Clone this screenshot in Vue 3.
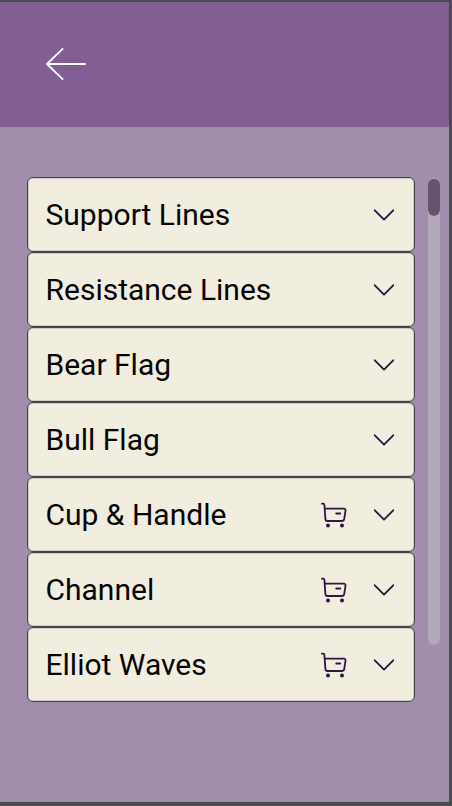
<script setup>
import { ref } from 'vue'

const patterns = ref([
  { name: 'Support Lines', locked: false },
  { name: 'Resistance Lines', locked: false },
  { name: 'Bear Flag', locked: false },
  { name: 'Bull Flag', locked: false },
  { name: 'Cup & Handle', locked: true },
  { name: 'Channel', locked: true },
  { name: 'Elliot Waves', locked: true },
])
</script>

<template>
  <div class="frame">
    <header class="header">
      <button class="back" aria-label="Back">
        <svg width="42" height="36" viewBox="0 0 42 36">
          <path d="M40 18H2M17.6 2.8L2 18L17.6 33.2" />
        </svg>
      </button>
    </header>
    <main class="content">
      <ul class="list">
        <li v-for="item in patterns" :key="item.name" class="item">
          <span class="label">{{ item.name }}</span>
          <svg v-if="item.locked" class="cart" width="28" height="28" viewBox="0 0 28 28">
            <path d="M1.9 2.7H3.2Q4.3 2.7 4.4 3.8L5.4 18Q5.5 20 7.5 20H21.8Q23.8 20 24.2 18L25.5 9.8Q25.8 7.7 23.7 7.7H4.7" />
            <path d="M16.2 12.5H20.3" />
            <circle cx="8" cy="24.4" r="2" />
            <circle cx="22" cy="24.4" r="2" />
          </svg>
          <svg class="chevron" width="22" height="14" viewBox="0 0 22 14">
            <path d="M1.8 2.3L11 11.6L20.2 2.3" />
          </svg>
        </li>
      </ul>
      <div class="track"><div class="thumb"></div></div>
    </main>
  </div>
</template>

<style>
body {
  margin: 0;
}
</style>

<style scoped>
.frame {
  box-sizing: border-box;
  width: 452px;
  height: 806px;
  display: flex;
  flex-direction: column;
  border: solid #484c4f;
  border-width: 2px 3px 4px 0;
  background: #a18dac;
  font-family: Roboto, "Liberation Sans", sans-serif;
}
.header {
  box-sizing: border-box;
  height: 125px;
  padding: 0 45px 1px;
  display: flex;
  align-items: center;
  background: #835e94;
}
.back {
  display: flex;
  padding: 0;
  border: 0;
  background: none;
}
.back path {
  fill: none;
  stroke: #fff;
  stroke-width: 1.8;
  stroke-linecap: round;
  stroke-linejoin: round;
}
.content {
  display: flex;
  align-items: flex-start;
  gap: 12.5px;
  padding: 50px 8px 0 27px;
}
.list {
  flex: none;
  width: 388px;
  margin: 0;
  padding: 0;
  list-style: none;
}
.item {
  box-sizing: border-box;
  height: 75px;
  display: flex;
  align-items: center;
  padding: 0 19px 0 17.5px;
  border: 1px solid #434446;
  border-radius: 6px;
  background: #f1eddf;
  box-shadow: inset 0 0 0 1px #d0cdc2;
}
.label {
  flex: 1;
  font-size: 30px;
  line-height: 36px;
  color: #050505;
}
.cart {
  margin: 1px 25px 0 0;
}
.cart path {
  fill: none;
  stroke: #2b1843;
  stroke-width: 1.8;
  stroke-linecap: round;
  stroke-linejoin: round;
}
.cart circle {
  fill: #2b1843;
}
.chevron path {
  fill: none;
  stroke: #2b1843;
  stroke-width: 1.9;
  stroke-linecap: round;
  stroke-linejoin: round;
}
.track {
  flex: none;
  width: 12.5px;
  height: 467px;
  margin-top: 1px;
  border-radius: 7px;
  background: #b1a9b7;
}
.thumb {
  box-sizing: border-box;
  height: 38px;
  border: solid transparent;
  border-width: 1px 0 0;
  border-radius: 7px;
  background: #65536f;
  background-clip: padding-box;
}
</style>
